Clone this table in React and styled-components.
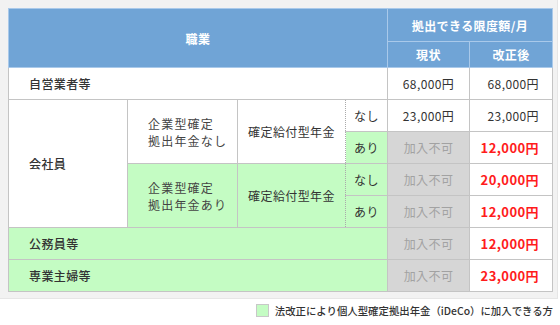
import React from 'react';
import styled, {createGlobalStyle} from 'styled-components';

const GlobalStyle = createGlobalStyle`
    body{
        margin: 0;
        background: white;
        font-family: 'Noto Sans CJK JP', 'Noto Sans', sans-serif;
        color: #333;
    }
`

const rows = [
    {label: '自営業者等', now: '68,000円', next: '68,000円'},
]

function App(){
    return(
        <Page>
            <GlobalStyle/>
            <Frame>
                <Table>
                    <colgroup>
                        <col style={{width: 119}}/>
                        <col style={{width: 110}}/>
                        <col style={{width: 108}}/>
                        <col style={{width: 42}}/>
                        <col style={{width: 82}}/>
                        <col style={{width: 83}}/>
                    </colgroup>
                    <thead>
                        <tr>
                            <Th colSpan={4} rowSpan={2}>職業</Th>
                            <Th colSpan={2} tall>拠出できる限度額/月</Th>
                        </tr>
                        <tr>
                            <Th>現状</Th>
                            <Th>改正後</Th>
                        </tr>
                    </thead>
                    <tbody>
                        {rows.map(r => (
                            <tr key={r.label}>
                                <Label colSpan={4}>{r.label}</Label>
                                <Amount>{r.now}</Amount>
                                <After>{r.next}</After>
                            </tr>
                        ))}
                        <tr>
                            <Label rowSpan={4}>会社員</Label>
                            <Plan rowSpan={2}>企業型確定<br/>拠出年金なし</Plan>
                            <Pension rowSpan={2}>確定給付型年金</Pension>
                            <Flag>なし</Flag>
                            <Amount>23,000円</Amount>
                            <After>23,000円</After>
                        </tr>
                        <tr>
                            <Flag green>あり</Flag>
                            <Amount closed>加入不可</Amount>
                            <After red>12,000円</After>
                        </tr>
                        <tr>
                            <Plan rowSpan={2} green>企業型確定<br/>拠出年金あり</Plan>
                            <Pension rowSpan={2} green>確定給付型年金</Pension>
                            <Flag green>なし</Flag>
                            <Amount closed>加入不可</Amount>
                            <After red>20,000円</After>
                        </tr>
                        <tr>
                            <Flag green>あり</Flag>
                            <Amount closed>加入不可</Amount>
                            <After red>12,000円</After>
                        </tr>
                        <tr>
                            <Label colSpan={4} green>公務員等</Label>
                            <Amount closed>加入不可</Amount>
                            <After red>12,000円</After>
                        </tr>
                        <tr>
                            <Label colSpan={4} green>専業主婦等</Label>
                            <Amount closed>加入不可</Amount>
                            <After red>23,000円</After>
                        </tr>
                    </tbody>
                </Table>
            </Frame>
            <Legend>
                <Swatch/>
                法改正により個人型確定拠出年金（iDeCo）に加入できる方
            </Legend>
        </Page>
    )
}

export default App;


const GREEN = '#c4fcc3';
const LINE = '#c4c4c4';

const Page = styled.div`
    width: 560px;
`
const Frame = styled.div`
    width: 558px;
    box-sizing: border-box;
    padding: 8px 5px 6px 8px;
    background: #f2f2f2;
    border-right: 1px solid #e6e6e6;
    border-bottom: 1px solid #e6e6e6;
`
const Table = styled.table`
    width: 545px;
    table-layout: fixed;
    border-collapse: collapse;
    font-size: 12px;
    letter-spacing: 0.4px;
    border: 1px solid #bdbdbd;
    td{
        border: 1px solid ${LINE};
        height: 31px;
        padding: 0;
        vertical-align: middle;
        line-height: 16px;
    }
`
const Th = styled.th`
    background: #70a4d6;
    color: white;
    font-weight: bold;
    font-size: 12px;
    border: 1px solid #a9c9ea;
    height: ${p => p.tall ? '32px' : '25px'};
    padding: 0;
    text-align: center;
`
const Cell = styled.td`
    background: ${p => p.green ? GREEN : 'white'};
`
const Label = styled(Cell)`
    padding-left: 20px !important;
    font-weight: 500;
`
const Plan = styled(Cell)`
    padding-left: 20px !important;
    line-height: 17px !important;
    letter-spacing: 1.2px;
    color: #444;
`
const Pension = styled(Cell)`
    text-align: center;
    border-right: 1px dotted #aaa !important;
`
const Flag = styled(Cell)`
    text-align: center;
    border-left: 1px dotted #aaa !important;
    border-top-style: ${p => p.green ? 'dotted' : 'solid'} !important;
`
const Amount = styled.td`
    text-align: center;
    background: ${p => p.closed ? '#d6d6d6' : 'white'};
    color: ${p => p.closed ? '#a2a2a2' : '#333'};
`
const After = styled.td`
    text-align: right;
    padding-right: 13px !important;
    background: white;
    color: ${p => p.red ? '#ff1c1c' : '#333'};
    font-weight: ${p => p.red ? 'bold' : 'normal'};
    font-size: ${p => p.red ? '13px' : '12px'};
`
const Legend = styled.div`
    display: flex;
    justify-content: flex-end;
    align-items: center;
    gap: 6px;
    padding: 4px 7px 0 0;
    font-size: 10.4px;
    font-weight: 500;
    color: #333;
`
const Swatch = styled.span`
    width: 11px;
    height: 11px;
    background: ${GREEN};
    border: 1px solid #c8c8c8;
`
